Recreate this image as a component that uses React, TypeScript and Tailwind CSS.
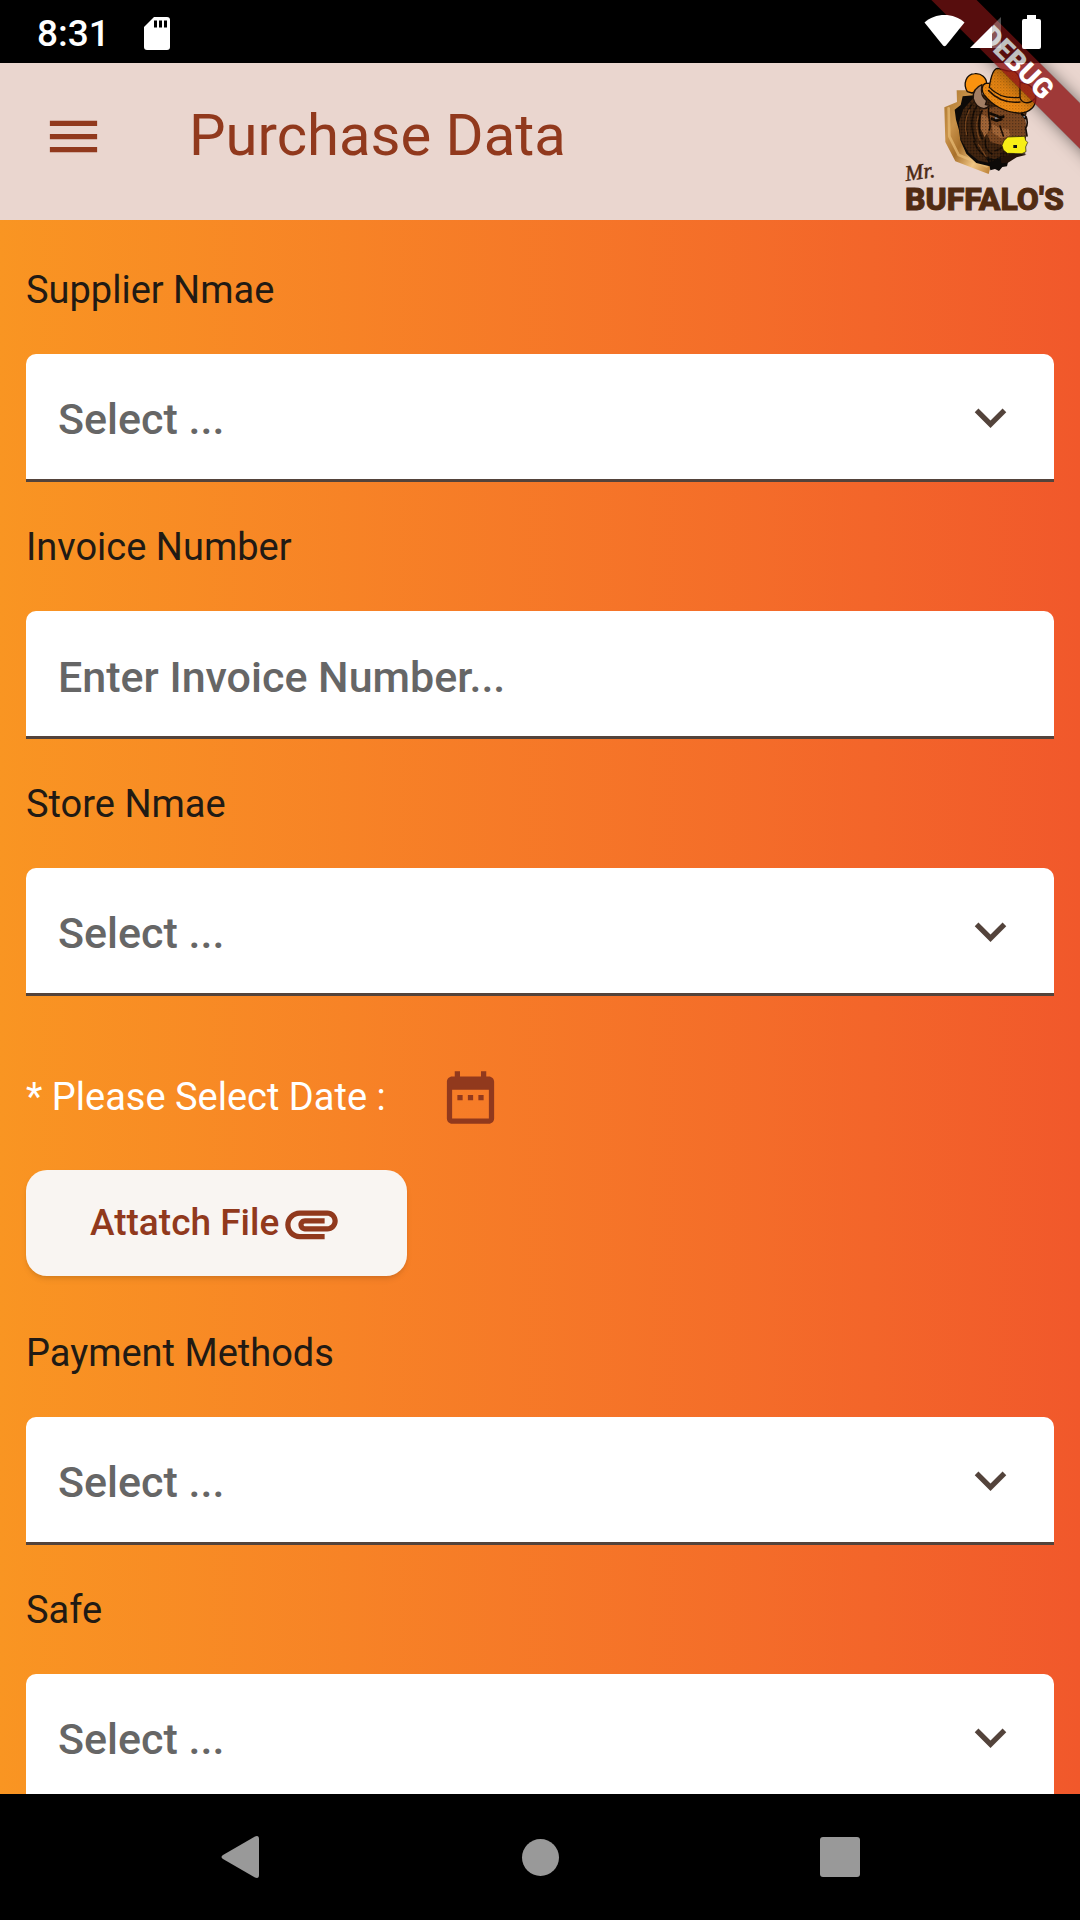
import React from "react";

function Chevron() {
  return (
    <svg viewBox="0 0 24 24" className="pointer-events-none absolute top-0 right-8 bottom-0.5 my-auto size-[63px] text-[#53433b]" fill="currentColor" aria-hidden="true">
      <path d="M7.41 8.59 12 13.17l4.59-4.58L18 10l-6 6-6-6z" />
    </svg>
  );
}

const controlClass =
  "block h-32 w-full appearance-none rounded-t-[10px] border-b-[3px] border-[#53433b] bg-white px-8 pt-1.5 text-[43px] font-medium text-[#666666] outline-none placeholder:text-[#666666] placeholder:opacity-100";

function Field({ id, label, kind }: { id: string; label: string; kind: "select" | "text" }) {
  return (
    <div className="flex flex-col gap-[38px]">
      <label htmlFor={id} className="text-[38px] leading-[52px] text-[#211a14]">
        {label}
      </label>
      <div className="relative">
        {kind === "select" ? (
          <>
            <select id={id} className={controlClass}>
              <option>Select ...</option>
            </select>
            <Chevron />
          </>
        ) : (
          <input id={id} type="text" placeholder="Enter Invoice Number..." className={controlClass} />
        )}
      </div>
    </div>
  );
}

function StatusBar() {
  return (
    <div className="relative z-20 flex h-[63px] shrink-0 items-center justify-between bg-black/25 pr-[39px] pl-[37px] text-white">
      <div className="flex items-center gap-[34px] pt-1">
        <span className="text-[37px] font-medium">8:31</span>
        <svg className="h-[33px] w-[26px]" viewBox="0 0 26 33" aria-hidden="true">
          <path d="M10 0h13a3 3 0 0 1 3 3v27a3 3 0 0 1-3 3H3a3 3 0 0 1-3-3V10z" fill="#fff" />
          <path d="M10 3.500h3v7h-3zM15 3.500h3v7h-3zM20 3.500h3v7h-3z" fill="#000" />
        </svg>
      </div>
      <svg className="h-[34px] w-[118px]" viewBox="0 0 118 34" aria-hidden="true">
        <path d="M1.500 7.500C12-2.500 31-2.500 41.500 7.500L23 30.500q-1.500 1.500-3 0z" fill="#fff" />
        <path d="M69 11 78 2v31h-9z" fill="#fff" opacity=".3" />
        <path d="M47 33 69 11v22z" fill="#fff" />
        <path d="M104 0h9v4h3a2 2 0 0 1 2 2v26a2 2 0 0 1-2 2h-15a2 2 0 0 1-2-2V6a2 2 0 0 1 2-2h3z" fill="#fff" />
      </svg>
    </div>
  );
}

function Logo() {
  return (
    <svg viewBox="0 0 170 156" className="mt-px h-[156px] w-[170px]" role="img" aria-label="Mr. Buffalo's">
      <defs>
        <linearGradient id="gold" x1="0" y1="0" x2="1" y2="1">
          <stop offset="0" stopColor="#a9752c" />
          <stop offset=".3" stopColor="#c9924a" />
          <stop offset=".5" stopColor="#a8702b" />
          <stop offset=".75" stopColor="#f0c684" />
          <stop offset="1" stopColor="#b87a2e" />
        </linearGradient>
        <pattern id="dots" width="9" height="9" patternUnits="userSpaceOnUse">
          <rect width="4" height="4" fill="#000" opacity=".3" />
          <rect x="4" y="4" width="4" height="4" fill="#7a3c0c" opacity=".3" />
        </pattern>
      </defs>
      <g transform="scale(.33333) translate(-60 -192)" strokeLinejoin="round" strokeLinecap="round">
        <path d="M230 271h58l10 40-45 60 20 80 60 45-7 26-22-8-78-30-30-58-3-104 38-16z" fill="url(#gold)" />
        <path d="M206 325l2 84 28 56 84 34" fill="none" stroke="#e9bd77" strokeWidth="8" opacity=".7" />
        <path d="M290 285l-42 4-6 26-18 14 4 30 9 32 4 30 18 40 30 28 40 10 2 12 14-4 12 6 10-12 14-2 4-16 20-18-60-60z" fill="#0d0a08" />
        <path d="M278 296l-28 32-14 40 6 50 24 40 30 24 30 6-12-20 30 10 40-20 30-8 20-10 4-30-4-46 6-26-8-18-80-20-30-20z" fill="#3a210f" />
        <path d="M300 330l60-12 74 22 4 30-2 40-40 0-30 26-34-10-14-30 4-36z" fill="#7a4723" />
        <path d="M304 340l20 14 4 34-14 24-12-26zM336 372l24 12 26 4 6 22-30 4-24-16z" fill="#a3673a" />
        <path d="M276 312c-20 30-26 60-14 92M290 318c-20 36-18 70-4 104M306 332c-14 32-12 50 0 84M282 424c6 20 18 34 34 44M316 420c-2 20 6 34 20 42M326 326c-4 20 10 40 2 64" fill="none" stroke="#130b06" strokeWidth="5" />
        <path d="M268 330c-14 30-14 56-8 74M294 350c-8 28-4 50 6 70M296 434l22 36" fill="none" stroke="#74441f" strokeWidth="4" />
        <path d="M330 340l30 12 10-2M336 356l14 6 14-4M426 342l10 12" fill="none" stroke="#0d0805" strokeWidth="8" />
        <path d="M343 350l12 5-9 3z" fill="#7d91a5" />
        <path d="M428 350l7 4 0-7z" fill="#7d91a5" />
        <path d="M438 350q8 20-1 34l4 24M360 378l10 30M346 452l34-14 20 26 34-2" fill="none" stroke="#180d07" strokeWidth="5" />
        <path d="M360 460l26-18 20 20 34 2-30 8-26 16-20 2z" fill="#24130a" />
        <path d="M278 296l-28 32-14 40 6 50 24 40 60 30 80-30 32-50-4-46 2-38-114-48z" fill="url(#dots)" />
        <path d="M384 411l50-2 3 12 6 6-6 14 1 14-12 6-44-1-12-10-4-14 6-14z" fill="#f7ee16" stroke="#1a1205" strokeWidth="2" />
        <path d="M400 435h11v9h-11z" fill="#111" />
        <path d="M262 275c-14-24-4-52 22-54 20-2 36 12 36 30l-22 20-22 8z" fill="#f9920f" stroke="#160d05" strokeWidth="4" />
        <path d="M316 250c-12 6-12 22-4 34 24 30 60 52 102 55 36 2 56-21 53-49-2-24-20-42-46-42z" fill="#f18c14" stroke="#160d05" strokeWidth="4" />
        <path d="M306 254c-20 8-28 24-26 42 4 16 16 28 32 30 10-2 14-6 16-10l-12-2 4-12c-16-10-18-28-14-48z" fill="#a27e64" stroke="#21130b" strokeWidth="4" />
        <path d="M328 262c4-30 10-54 24-57 18 1 28 13 44 7 16 3 26 22 24 42v38c-36 4-70-6-92-30z" fill="#e88612" stroke="#160d05" strokeWidth="4" />
        <path d="M326 272c24 26 58 38 94 34" fill="none" stroke="#251204" strokeWidth="5" />
        <path d="M420 292c4 18 26 24 46 2" fill="none" stroke="#251204" strokeWidth="4" />
        <path d="M316 250c-12 6-12 22-4 34 24 30 60 52 102 55 36 2 56-21 53-49-2-24-20-42-46-42 0-22-10-34-26-36-16 6-26-6-44-7-14 3-20 27-24 57z" fill="url(#dots)" opacity=".6" />
      </g>
      <text x="6" y="117" fontFamily="'Liberation Serif', serif" fontStyle="italic" fontSize="22" fill="#4b2813" stroke="#4b2813" strokeWidth=".5" transform="rotate(-8 6 117)">
        Mr.
      </text>
      <text x="5" y="146" fontFamily="Roboto, sans-serif" fontWeight="800" fontSize="32" fill="#512b12" stroke="#512b12" strokeWidth="1">
        BUFFALO'S
      </text>
    </svg>
  );
}

function DebugBanner() {
  return (
    <div className="pointer-events-none absolute top-0 right-0 z-10 size-[180px] overflow-hidden">
      <div className="absolute top-[47px] -right-[87px] h-8 w-[300px] rotate-45 bg-black/50 shadow-[0_0_16px_rgba(0,0,0,0.5)]">
        <div className="flex h-full items-center justify-center bg-[#b71c1c]/63 text-[28px] font-black text-white">DEBUG</div>
      </div>
    </div>
  );
}

const navButton = "flex h-full items-center justify-center";

export default function App() {
  return (
    <div className="relative flex h-screen flex-col overflow-hidden bg-black font-[Roboto,sans-serif]">
      <StatusBar />
      <header className="flex h-[157px] shrink-0 items-start justify-between bg-[#ead6cf] pr-[10px] pl-[42px] text-[#91391d]">
        <div className="flex h-[147px] items-center">
          <button type="button" aria-label="Open menu">
            <svg viewBox="0 0 24 24" className="size-[63px]" fill="currentColor">
              <path d="M3 18h18v-2H3zm0-5h18v-2H3zm0-7v2h18V6z" />
            </svg>
          </button>
          <h1 className="ml-[84px] pb-1 text-[58px] leading-[74px]">Purchase Data</h1>
        </div>
        <Logo />
      </header>
      <main className="min-h-0 flex-1 overflow-hidden bg-linear-to-r from-[#f99522] to-[#f1582b] px-[26px] pt-11">
        <div className="flex flex-col gap-[39px]">
          <Field id="supplier" label="Supplier Nmae" kind="select" />
          <Field id="invoice" label="Invoice Number" kind="text" />
          <Field id="store" label="Store Nmae" kind="select" />
        </div>
        <div className="mt-[38px] flex h-[126px] items-center">
          <span className="text-[38px] text-white">* Please Select Date :</span>
          <button type="button" aria-label="Select date" className="ml-[22px] flex size-[126px] items-center justify-center text-[#91391d]">
            <svg viewBox="0 0 24 24" className="size-[63px]" fill="currentColor">
              <path d="M9 11H7v2h2zm4 0h-2v2h2zm4 0h-2v2h2zm2-7h-1V2h-2v2H8V2H6v2H5c-1.110 0-1.990.9-1.990 2L3 20c0 1.100.89 2 2 2h14c1.100 0 2-.9 2-2V6c0-1.100-.9-2-2-2m0 16H5V9h14z" />
            </svg>
          </button>
        </div>
        <button type="button" className="mt-[10px] mb-[51px] flex h-[106px] items-center gap-px rounded-[21px] bg-[#f9f5f2] px-16 text-[37px] font-medium text-[#91391d] shadow-md">
          Attatch File
          <svg viewBox="0 0 24 24" className="size-[63px]" fill="currentColor" aria-hidden="true">
            <path d="M2 12.500C2 9.460 4.460 7 7.500 7H18c2.210 0 4 1.790 4 4s-1.790 4-4 4H9.500C8.120 15 7 13.880 7 12.500S8.120 10 9.500 10H17v2H9.410c-.55 0-.55 1 0 1H18c1.100 0 2-.9 2-2s-.9-2-2-2H7.500C5.570 9 4 10.570 4 12.500S5.570 16 7.500 16H17v2H7.500C4.460 18 2 15.540 2 12.500" />
          </svg>
        </button>
        <div className="flex flex-col gap-[39px]">
          <Field id="payment" label="Payment Methods" kind="select" />
          <Field id="safe" label="Safe" kind="select" />
        </div>
      </main>
      <nav aria-label="System" className="grid h-[126px] shrink-0 grid-cols-3 bg-black px-[90px] text-[#999999]">
        <button type="button" aria-label="Back" className={navButton}>
          <svg viewBox="0 0 38 44" className="h-11 w-[38px]" fill="currentColor">
            <path d="M34 1.500Q38 0 38 4v36q0 4-4 2.500L2 24q-3-2 0-4z" />
          </svg>
        </button>
        <button type="button" aria-label="Home" className={navButton}>
          <span className="size-[37px] rounded-full bg-current" />
        </button>
        <button type="button" aria-label="Recent apps" className={navButton}>
          <span className="size-10 rounded-[3px] bg-current" />
        </button>
      </nav>
      <DebugBanner />
    </div>
  );
}
